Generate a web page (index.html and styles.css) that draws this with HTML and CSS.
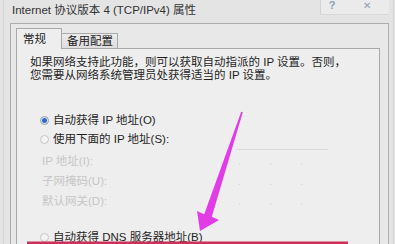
FILE: index.html
```html
<!DOCTYPE html>
<html lang="zh-CN">
<head>
    <meta charset="UTF-8">
    <title>Internet 协议版本 4 (TCP/IPv4) 属性</title>
    <link rel="stylesheet" href="styles.css">
</head>
<body>
<div class="window">
    <header class="titlebar">
        <span class="title">Internet 协议版本 4 (TCP/IPv4) 属性</span>
        <div class="caption-btns">
            <span class="cbtn help">?</span>
            <span class="cbtn close">✕</span>
        </div>
    </header>
    <div class="client">
        <nav class="tabs">
            <a href="#" class="tab active">常规</a>
            <a href="#" class="tab">备用配置</a>
        </nav>
        <div class="panel">
            <p class="intro">如果网络支持此功能，则可以获取自动指派的 IP 设置。否则，<br>您需要从网络系统管理员处获得适当的 IP 设置。</p>
            <label class="radio checked"><i></i>自动获得 IP 地址(O)</label>
            <label class="radio second"><i></i>使用下面的 IP 地址(S):</label>
            <div class="ip-rule"></div>
            <div class="field"><span class="label">IP 地址(I):</span><span class="ip"><b>.</b><b>.</b><b>.</b></span></div>
            <div class="field"><span class="label">子网掩码(U):</span><span class="ip"><b>.</b><b>.</b><b>.</b></span></div>
            <div class="field last"><span class="label">默认网关(D):</span><span class="ip"><b>.</b><b>.</b><b>.</b></span></div>
            <label class="radio dns"><i></i>自动获得 DNS 服务器地址(B)</label>
        </div>
    </div>
</div>
<!-- annotation drawn over the screenshot -->
<svg class="marks" width="395" height="244" viewBox="0 0 395 244">
    <polygon fill="#e23ce6" points="241.2,111.7 242.8,112.3 211.8,216.8 219,220 200,231 197,211 204.2,214.2"/>
    <rect x="27" y="241.5" width="321" height="3" fill="#cc3157"/>
</svg>
</body>
</html>
```

FILE: styles.css
```css
html, body {
    margin: 0;
    height: 100%;
}

body {
    width: 395px;
    height: 244px;
    overflow: hidden;
    position: relative;
    background: #e4e4e4;
    font: 11.5px/13px "Liberation Sans", "Noto Sans CJK SC", sans-serif;
    color: #1f1f1f;
}

.window {
    box-sizing: border-box;
    margin-left: 3px;
    width: 391px;
    height: 244px;
    border-left: 1px solid #d6d6d6;
    border-right: 1px solid #d6d6d6;
}

.titlebar {
    display: flex;
    align-items: flex-start;
    height: 23px;
}

.title {
    padding: 4px 0 0 8px;
    color: #333;
}

.caption-btns {
    display: flex;
    margin-left: auto;
    margin-right: 4px;
    width: 68px;
    height: 14px;
    border-left: 1px solid #d0d4d8;
    border-bottom: 1px solid #d8d8d8;
    background: #ebebeb;
}

.cbtn {
    display: block;
    height: 12px;
    line-height: 11px;
    font-size: 11px;
    color: #8d9fb0;
    text-align: center;
}

.help {
    width: 22px;
    font-weight: bold;
}

.close {
    width: 20px;
    margin-left: 14px;
    font-size: 10px;
}

.client {
    height: 221px;
    margin: 0 4px 0 6px;
    padding: 4px 8px 0 5px;
    border: 1px solid #adadad;
    border-bottom: none;
    background: #e8e8e8;
}

.tabs {
    display: flex;
    align-items: flex-end;
    height: 20px;
}

.tab {
    box-sizing: border-box;
    display: block;
    color: #222;
    text-decoration: none;
    border: 1px solid #a9a9a9;
    border-bottom: none;
}

.tab.active {
    position: relative;
    z-index: 1;
    width: 46px;
    height: 21px;
    margin-bottom: -1px;
    padding: 4px 0 0 6px;
    background: #eeeeee;
}

.tab:not(.active) {
    width: 56px;
    height: 15px;
    padding: 1px 0 0 5px;
    border-left: none;
    background: linear-gradient(#ececec, #dedede);
}

.panel {
    height: 195px;
    padding: 7px 0 0 13px;
    border: 1px solid #a9a9a9;
    border-bottom: none;
    background: #eeeeee;
}

.intro {
    margin: 0 0 28px;
}

.radio {
    display: flex;
    align-items: center;
    height: 20px;
    margin-left: 10px;
    white-space: nowrap;
}

.radio.second {
    height: 19px;
}

.radio i {
    box-sizing: border-box;
    width: 9px;
    height: 9px;
    margin-right: 4px;
    border: 1px solid #c6c6c6;
    border-radius: 50%;
    background: #f3f3f3;
}

.radio.checked i {
    border-color: #8e9cab;
    background: radial-gradient(circle, #2d6cc2 0 2px, #9fbbe0 2.6px, #eef2f7 3.2px);
}

.ip-rule {
    width: 92px;
    height: 1px;
    margin: 0 0 1px 206px;
    background: #dadada;
}

.field {
    display: flex;
    align-items: center;
    height: 20px;
    margin-left: 12px;
    color: #c6c6c6;
}

.field.last {
    height: 21px;
}

.label {
    width: 196px;
}

.ip {
    display: flex;
}

.ip b {
    width: 31px;
    font-weight: normal;
    color: #d2d2d2;
}

.radio.dns {
    height: 16px;
    margin-top: 16px;
    align-items: flex-start;
    padding-top: 3px;
}

.radio.dns i {
    margin-top: 2px;
}

.marks {
    position: absolute;
    left: 0;
    top: 0;
    pointer-events: none;
}
```
